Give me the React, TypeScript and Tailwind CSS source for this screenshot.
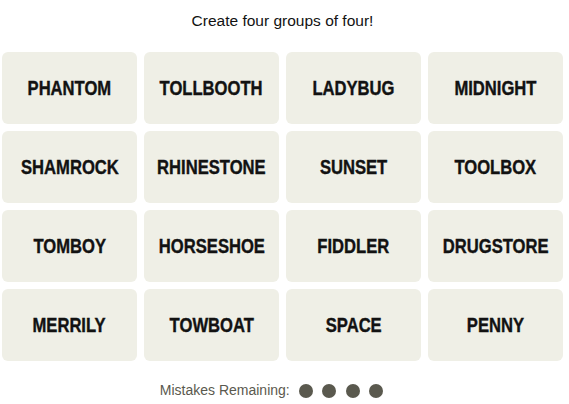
const words = [
  "PHANTOM", "TOLLBOOTH", "LADYBUG", "MIDNIGHT",
  "SHAMROCK", "RHINESTONE", "SUNSET", "TOOLBOX",
  "TOMBOY", "HORSESHOE", "FIDDLER", "DRUGSTORE",
  "MERRILY", "TOWBOAT", "SPACE", "PENNY",
];

export default function App() {
  return (
    <div className="w-[569px] h-[404px] bg-white" style={{ fontFamily: "'Liberation Sans', Arial, sans-serif" }}>
      <div className="w-[565px] flex flex-col items-center">
        <p className="mt-[11px] h-[20px] text-[15.5px] leading-[20px] text-[#121212]">
          Create four groups of four!
        </p>
        <div className="mt-[21px] ml-[2px] w-[561px] self-start grid grid-cols-4 gap-[7px]">
          {words.map((w) => (
            <button
              key={w}
              className="h-[72px] rounded-[6px] bg-[#efefe6] flex items-center justify-center text-[20px] font-bold text-[#121212]"
            >
              <span className="inline-block scale-x-[0.83] whitespace-nowrap [-webkit-text-stroke:0.4px_#121212]">{w}</span>
            </button>
          ))}
        </div>
        <div className="mt-[19px] mr-[22px] flex items-center text-[14px] text-[#5a594e]">
          <span>Mistakes Remaining:</span>
          <div className="ml-[9px] flex gap-[9.5px]">
            {[0, 1, 2, 3].map((i) => (
              <span key={i} className="w-[14px] h-[14px] rounded-full bg-[#5a594e]" />
            ))}
          </div>
        </div>
      </div>
    </div>
  );
}
